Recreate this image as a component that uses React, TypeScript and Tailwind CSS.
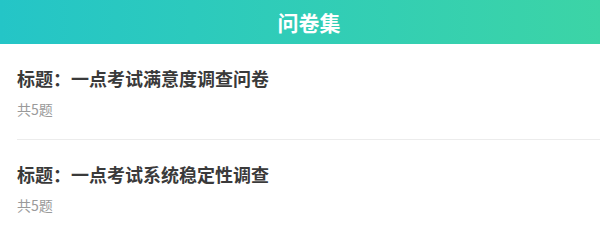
import React from 'react';

const surveys = [
  { title: '标题：一点考试满意度调查问卷', count: 5 },
  { title: '标题：一点考试系统稳定性调查', count: 5 },
];

export default function App() {
  return (
    <div className="w-[600px] min-h-[237px] bg-white font-['Noto_Sans_CJK_SC','Noto_Sans',sans-serif]">
      <div className="h-[44px] pl-[18px] flex items-center justify-center bg-gradient-to-r from-[#24c5c7] to-[#3cd4a6]">
        <h1 className="text-white text-[21px] font-bold leading-none">问卷集</h1>
      </div>
      <ul className="pl-[17px]">
        {surveys.map((s, i) => (
          <li
            key={i}
            className={`pt-[22px] pb-[21px] ${i < surveys.length - 1 ? 'border-b border-[#ececec]' : ''}`}
          >
            <p className="text-[18px] leading-[24px] font-bold text-[#3a3a3a]">{s.title}</p>
            <p className="mt-[10px] text-[14px] leading-[18px] text-[#9a9a9a]">共{s.count}题</p>
          </li>
        ))}
      </ul>
    </div>
  );
}
